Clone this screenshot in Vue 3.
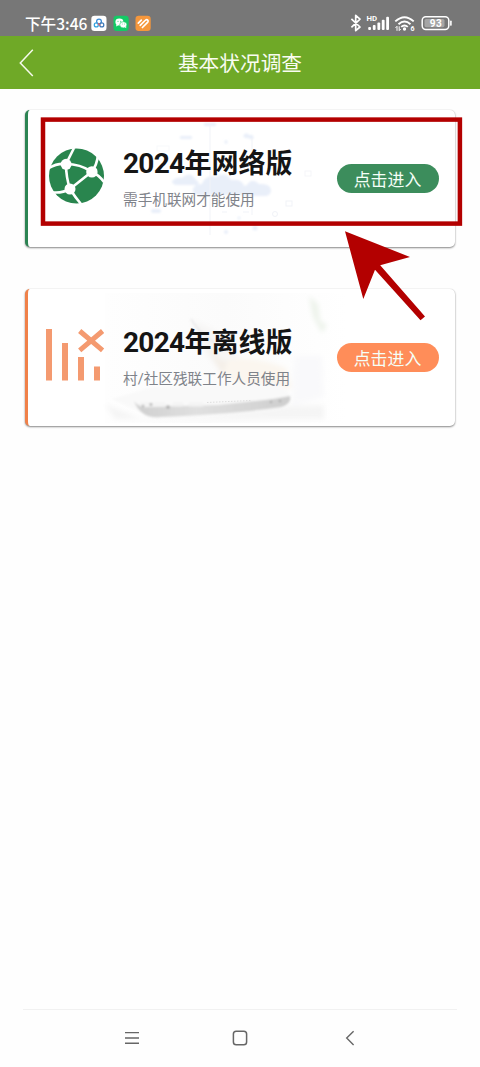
<script setup>
const cards = [
  { kind: 'online', year: '2024', title: '年网络版', note: '需手机联网才能使用' },
  { kind: 'offline', year: '2024', title: '年离线版', note: '村/社区残联工作人员使用' },
]
</script>

<template>
  <div class="screen">
    <div class="status">
      <span class="time">下午3:46</span>
      <svg class="apps" width="61" height="17" viewBox="0 0 61 17">
        <rect x="0.3" y="0.8" width="15.2" height="15.2" rx="3.2" fill="#fff" />
        <g fill="none" stroke-width="1.25">
          <circle cx="8" cy="6.5" r="2.4" stroke="#3a8bd6" />
          <circle cx="5.3" cy="9.9" r="2" stroke="#35a3df" />
          <circle cx="10.8" cy="9.9" r="2" stroke="#407bb9" />
          <path d="M7 8.3l2.2 2.2" stroke="#e06267" />
        </g>
        <rect x="22.5" y="0.8" width="15.2" height="15.2" rx="3.2" fill="#14ca66" />
        <ellipse cx="28.4" cy="7" rx="4" ry="3.4" fill="#fff" />
        <path d="M25.5 9l-.4 2.5 2.2-1.2z" fill="#fff" />
        <ellipse cx="32.3" cy="9.8" rx="3.6" ry="3.1" fill="#fff" stroke="#14ca66" stroke-width=".6" />
        <path d="M33.5 12l1.8 1.2-.3-2z" fill="#fff" />
        <g fill="#14ca66"><circle cx="27" cy="6.2" r=".55" /><circle cx="29.7" cy="6.2" r=".55" /><circle cx="31.2" cy="9" r=".45" /><circle cx="33.5" cy="9" r=".45" /></g>
        <rect x="44.5" y="0.8" width="15.2" height="15.2" rx="3.2" fill="#f5973c" />
        <path d="M47.3 8.2l3-3M49.2 10.4l4.4-4.4M51.4 12.5l5.4-5.4q.8-1.1-.1-2t-2.1.1" fill="none" stroke="#fff" stroke-width="1.7" stroke-linecap="round" />
      </svg>
      <svg class="signals" width="106" height="20" viewBox="350 13 106 20">
        <path d="M351.4 18.8l8.6 8.2-4.3 3.7V15.3l4.3 3.8-8.6 8.2" fill="none" stroke="#fff" stroke-width="1.7" stroke-linejoin="round" />
        <text x="366.4" y="21.4" class="hd">HD</text>
        <g fill="#fff">
          <rect x="368.2" y="27" width="2.8" height="3" rx="1" />
          <rect x="372.8" y="25" width="2.8" height="5" rx="1" />
          <rect x="377.4" y="22.5" width="2.8" height="7.5" rx="1" />
          <rect x="381.8" y="19.7" width="2.8" height="10.3" rx="1" />
          <rect x="386.2" y="16.8" width="2.8" height="13.2" rx="1" />
        </g>
        <g fill="none" stroke="#fff" stroke-width="1.9">
          <path d="M395.3 21.4Q404.5 12.9 413.7 21.4" />
          <path d="M398.5 24.2Q404.5 18.6 410.5 24.2" />
          <path d="M401.2 26.9Q404.5 24 407.8 26.9" />
        </g>
        <circle cx="404.5" cy="29" r="1.7" fill="#fff" />
        <path d="M397 30.8v-4.5l-1.5 1.5M399.2 26.3v4.3l1.6-1.6" fill="none" stroke="#fff" stroke-width="1" />
        <text x="410.4" y="31.2" class="six">6</text>
        <rect x="422.2" y="16.8" width="26.6" height="12.6" rx="3.6" fill="none" stroke="#fff" stroke-width="1.5" />
        <rect x="424.5" y="19" width="20" height="8.2" rx="1.6" fill="#a5a5a5" />
        <path d="M450.9 21.3v3.8" stroke="#fff" stroke-width="1.6" stroke-linecap="round" />
        <text x="436" y="26.9" text-anchor="middle" class="level">93</text>
      </svg>
    </div>

    <header class="bar">
      <svg class="back" width="18" height="30" viewBox="0 0 18 30"><path d="M14.8 1.8L2.3 14.9 14.8 28" fill="none" stroke="#f6faed" stroke-width="1.5" /></svg>
      <h1>基本状况调查</h1>
    </header>

    <main>
      <section v-for="card in cards" :key="card.kind" class="card" :class="card.kind">
        <svg v-if="card.kind === 'online'" class="art" width="427" height="136" viewBox="28 110 427 136">
          <defs><filter id="haze"><feGaussianBlur stdDeviation="0.9" /></filter></defs>
          <g filter="url(#haze)" fill="#e9eff9">
            <path d="M193 192q-1-8 9-8q4-10 14-7q9-6 15 3q14-2 14 12q-2 3-8 3h-38q-5 0-6-3z" />
            <path d="M172 181q5-5 10-3q8-8 14 2q4 2 2 5h-22q-4-1-4-4z" />
            <path d="M241 193q-1-6 6-8q5-8 12-1q12-1 12 7q-1 5-6 5h-18q-5 0-6-3z" />
            <rect x="180" y="136" width="12" height="3" rx="1" /><rect x="204" y="123" width="12" height="3" rx="1" />
            <path d="M243 136q3-5 6-1q4-1 5 3q-3 3-5 0q-4 1-6-2z" /><rect x="151" y="209" width="10" height="4" rx="2" />
            <circle cx="226" cy="142" r="1.8" /><circle cx="226" cy="232" r="2" /><circle cx="239" cy="218" r="1.5" />
            <circle cx="255" cy="228" r="2.5" />
          </g>
          <g fill="none" stroke="#f1f3f8">
            <path d="M210 126v109M252 138v30M252 197v18" />
            <rect x="286" y="201" width="6" height="5" /><rect x="305" y="171" width="6" height="5" stroke="#f5f6f9" /><rect x="157" y="146" width="12" height="5" stroke="#f8f9fb" /><circle cx="275" cy="214" r="2.5" /><path d="M243 212h6M222 212h5" />
          </g>
          <circle cx="76.5" cy="176" r="27.5" fill="#29854e" />
          <g fill="none" stroke="#fff" stroke-width="2.6">
            <path d="M66 164L74 148M66 164Q57 163 49 168M66 164Q66 177 70 189M66 164Q80 164 91.7 171.7M91.7 171.7Q97 165 98 155M91.7 171.7Q99 175 104 182M91.7 171.7L70 189M70 189Q61 194 50 192M70 189Q75 197 81 204" />
          </g>
          <g fill="#fff"><circle cx="66.1" cy="164.3" r="5.5" /><circle cx="91.9" cy="171.9" r="5.7" /><circle cx="70" cy="189" r="5.5" /></g>
        </svg>
        <svg v-else class="art" width="427" height="136" viewBox="28 289 427 136">
          <defs>
            <filter id="soft" x="-20%" y="-20%" width="140%" height="140%"><feGaussianBlur stdDeviation="2.6" /></filter>
            <filter id="edge"><feGaussianBlur stdDeviation="0.9" /></filter>
            <linearGradient id="desk" x1="0" y1="0" x2="1" y2="0"><stop offset="0" stop-color="#fefefe" /><stop offset=".5" stop-color="#fbfbfb" /><stop offset="1" stop-color="#fff" /></linearGradient>
            <linearGradient id="side" x1="0" y1="0" x2="1" y2="0"><stop offset="0" stop-color="#cfcfcf" /><stop offset=".4" stop-color="#e0e0e0" /><stop offset="1" stop-color="#cecece" /></linearGradient>
          </defs>
          <rect x="105" y="293" width="242" height="130" fill="url(#desk)" />
          <g filter="url(#soft)">
            <path d="M191 319q24 10 41 22l8 24-15 9q-22-15-34-55" fill="#f7f6f5" />
            <path d="M206 344l16 17 22-3 13 16-18 9-18-10z" fill="#f4efe8" />
            <path d="M228 360q26-5 58 8l6 20-30 4-40-16z" fill="#fbf6ef" />
            <path d="M294 356h28l2 41-32 9z" fill="#f9f9fb" />
            <path d="M105 404l34 14 76-2 74-10 35-1v14H115z" fill="#f5f5f5" />
            <path d="M309 296l9 8 2 17 7 4-5 8-9-16z" fill="#edf3eb" />
          </g>
          <path d="M191 319q12 20 35 29" fill="none" stroke="#e6e6e8" stroke-width="1.4" filter="url(#edge)" />
          <g filter="url(#edge)">
            <path d="M112 399l40-12 120-4q16 5 18 13l-6 5-60 7-84 4z" fill="#f9f9f9" />
            <path d="M134 401q5 7 14 6l70-2 55-6 17-3q2 8-9 11-45 7-121 10-19 2-26-16" fill="url(#side)" />
            <path d="M141 404.500h7m7 0h9m10 0h8m8 0h12" stroke="#f4f4f4" stroke-width="4" stroke-linecap="round" />
            <g fill="#aaa"><circle cx="143" cy="406" r="1.2" /><circle cx="151" cy="404.500" r="1.4" /><circle cx="168" cy="407" r="1.8" /><circle cx="271" cy="402" r="1.2" /><circle cx="280" cy="401" r="1.2" /></g>
          </g>
          <path d="M207 402.500l44-2" stroke="#dedede" stroke-dasharray="1.5 1.5" />
          <g fill="#f49a70"><rect x="46" y="329" width="6" height="51.5" /><rect x="62" y="343" width="6" height="37.5" /><rect x="78" y="357" width="6" height="23.5" /><rect x="94" y="366.5" width="6" height="14" /></g>
          <path d="M79.7 331L102.6 350.3M102.6 331L79.7 350.3" stroke="#f49a70" stroke-width="5" />
        </svg>
        <div class="copy">
          <h2><span class="year">{{ card.year }}</span>{{ card.title }}</h2>
          <p>{{ card.note }}</p>
        </div>
        <button>点击进入</button>
      </section>
    </main>

    <nav>
      <svg width="480" height="57" viewBox="0 1010 480 57" fill="none" stroke="#666" stroke-width="1.4">
        <path d="M125 1032.6h14M125 1038h14M125 1043.3h14" />
        <rect x="233.4" y="1031.3" width="13.2" height="13.4" rx="2.8" stroke-width="1.5" />
        <path d="M353.6 1031.2L346.7 1038l6.9 6.9" />
      </svg>
    </nav>

    <svg class="markup" width="480" height="340" viewBox="0 0 480 340">
      <rect x="43" y="119.6" width="416.9" height="104" fill="none" stroke="#b30000" stroke-width="4.5" />
      <path d="M345 231.3L410 257 380.2 265.2 425 316.4 420.5 320.2 375 269.7 363.3 299z" fill="#b30000" />
    </svg>
  </div>
</template>

<style>
body { margin: 0; background: #fefefe; }
</style>

<style scoped>
.screen { position: relative; width: 480px; height: 1067px; overflow: hidden; display: flex; flex-direction: column; background: #fefefe; font-family: Roboto, "Noto Sans CJK SC", sans-serif; }
.status { height: 36px; flex: none; display: flex; align-items: flex-start; background: #777; color: #fff; }
.time { width: 66px; margin: 11px 0 0 25px; font-size: 15.6px; line-height: 24px; white-space: nowrap; font-weight: 500; font-family: "Noto Sans CJK SC", sans-serif; }
.apps { margin-top: 14.5px; }
.signals { margin: 13px 0 0 198px; }
.signals text { font-family: Roboto, sans-serif; fill: #fff; font-weight: 700; }
.signals .hd { font-size: 7.8px; }
.signals .six { font-size: 7px; }
.signals .level { font-size: 10px; letter-spacing: .4px; }
.bar { height: 53px; flex: none; display: grid; grid-template-columns: 60px 1fr 60px; align-items: center; background: #6fa927; }
.back { margin-left: 18px; }
h1 { margin: 3px 0 0; text-align: center; font-size: 20.7px; line-height: 30px; font-weight: 400; color: #f9fcf1; }
main { flex: 1; display: flex; flex-direction: column; gap: 42px; padding: 21px 25.5px 0 24.5px; }
.card { position: relative; box-sizing: border-box; height: 136.5px; margin-bottom: .5px; display: flex; align-items: flex-start; justify-content: space-between; padding: 0 16px 0 95.5px; border-left: 3.5px solid #2c8453; border-radius: 5px; background: #fff; box-shadow: 0 1px 2px #888, 0 0 1px #ccc; overflow: hidden; }
.offline { border-left-color: #f08149; }
.art { position: absolute; left: 0; top: 0; }
.copy { position: relative; white-space: nowrap; }
h2 { margin: 34px 0 0; height: 40px; font-size: 27px; line-height: 40px; font-weight: 700; color: #151515; }
.year { font-size: 28px; letter-spacing: -.7px; line-height: 1; }
p { margin: 5px 0 0; font-size: 14.65px; line-height: 22px; color: #7f838a; }
button { position: relative; width: 102px; height: 29px; margin: 53.5px 0 0; padding: 0; border: 0; border-radius: 15px; background: #3c8d5c; color: #f5fff7; font: 400 16.9px/29px "Noto Sans CJK SC", sans-serif; }
.offline button { background: #ff8d59; }
nav { height: 57px; flex: none; border-top: 1px solid #f1f1f1; margin: 0 23px; }
nav svg { display: block; margin-left: -23px; }
.markup { position: absolute; left: 0; top: 0; pointer-events: none; }
</style>
